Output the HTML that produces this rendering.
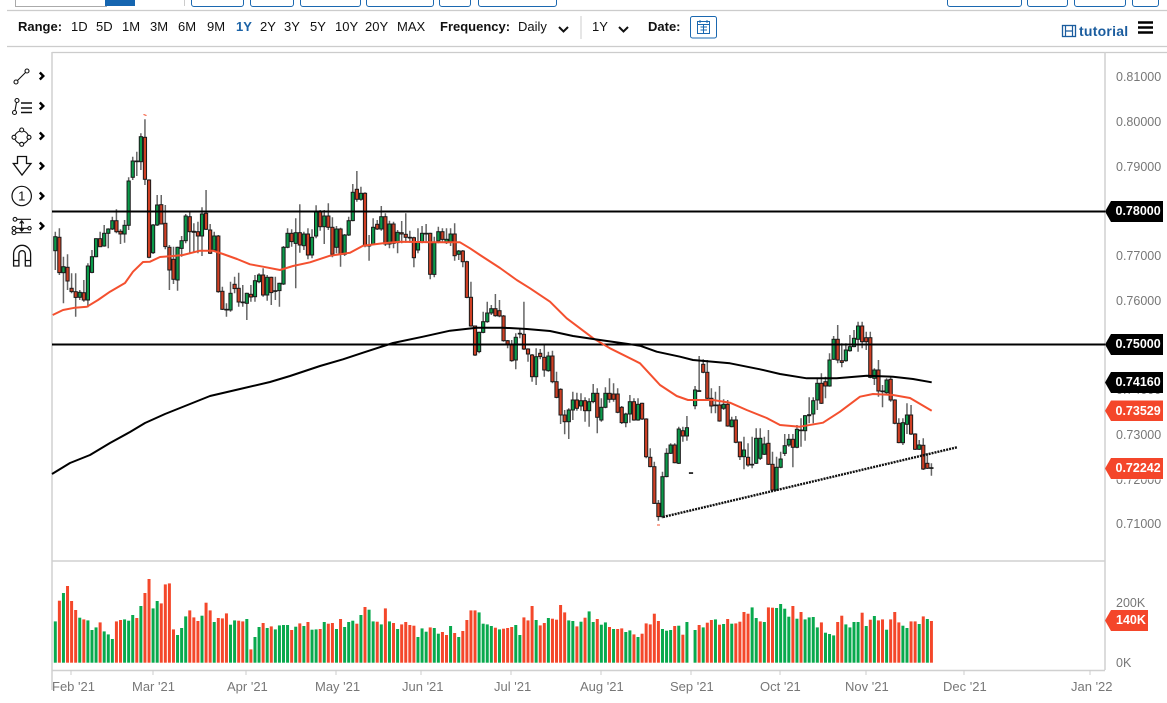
<!DOCTYPE html>
<html><head><meta charset="utf-8"><title>Chart</title>
<style>
html,body{margin:0;padding:0;background:#fff;width:1167px;height:703px;overflow:hidden}
body{position:relative;font-family:"Liberation Sans",sans-serif;color:#111}
.t{position:absolute;font-size:13px;line-height:16px;top:19px;white-space:nowrap}
.b{font-weight:bold}
.btn{position:absolute;top:-4px;height:8.5px;border:1px solid #1b68b0;border-radius:3px;box-sizing:content-box}
svg{position:absolute;left:0;top:0}
</style></head><body>
<div style="position:absolute;left:15px;top:-3px;width:90px;height:8px;border:1px solid #aaa"></div>
<div style="position:absolute;left:105px;top:0;width:30px;height:6px;background:#1565b0"></div>
<div style="position:absolute;left:184px;top:0;width:1px;height:6px;background:#ccc"></div>
<div class="btn" style="left:191px;width:51px"></div>
<div class="btn" style="left:250px;width:42px"></div>
<div class="btn" style="left:300px;width:59px"></div>
<div class="btn" style="left:366px;width:66px"></div>
<div class="btn" style="left:439px;width:30px"></div>
<div class="btn" style="left:478px;width:77px"></div>
<div class="btn" style="left:947px;width:73px"></div>
<div class="btn" style="left:1027px;width:39px"></div>
<div class="btn" style="left:1074px;width:50px"></div>
<div class="btn" style="left:1132px;width:25px"></div>

<span class="t b" style="left:18px">Range:</span>
<span class="t" style="left:71px">1D</span>
<span class="t" style="left:96px">5D</span>
<span class="t" style="left:122px">1M</span>
<span class="t" style="left:150px">3M</span>
<span class="t" style="left:178px">6M</span>
<span class="t" style="left:207px">9M</span>
<span class="t b" style="left:236px;color:#1b62a5">1Y</span>
<span class="t" style="left:260px">2Y</span>
<span class="t" style="left:284px">3Y</span>
<span class="t" style="left:310px">5Y</span>
<span class="t" style="left:335px">10Y</span>
<span class="t" style="left:365px">20Y</span>
<span class="t" style="left:397px">MAX</span>
<span class="t b" style="left:440px">Frequency:</span>
<span class="t" style="left:518px">Daily</span>
<span class="t" style="left:592px">1Y</span>
<span class="t b" style="left:648px">Date:</span>
<span class="t b" style="left:1079px;top:23px;color:#1a5c9e;font-size:14px;letter-spacing:.25px">tutorial</span>

<svg width="1167" height="703" viewBox="0 0 1167 703" fill="none">
<path d="M7 10.5H1167M7 46.5H1167M52 52.5H1167" stroke="#ccc" stroke-width="1.2"/>
<path d="M581 16V39" stroke="#ccc"/>
<path d="M52 52V690M1105 52V670M52 561H1105M52 670.5H1105" stroke="#d0d0d0" stroke-width="1.5"/>
<path d="M71 670V675M153 670V675M246 670V675M336 670V675M421 670V675M511 670V675M601 670V675M691 670V675M780 670V675M866 670V675M964 670V675M1090 670V675" stroke="#ccc"/>
<!-- header icons -->
<path d="M559 27l4.5 4.5 4.5-4.5M619 27l4.5 4.5 4.5-4.5" stroke="#111" stroke-width="2"/>
<rect x="690.5" y="16.5" width="26" height="21.5" rx="2" stroke="#1b68b0"/>
<rect x="697.5" y="21.5" width="12" height="12" stroke="#1b68b0"/>
<path d="M697 24.5H710M700 20V23M707 20V23M700.5 27H707M700.5 30H707M703.5 25V33" stroke="#1b68b0"/>
<rect x="1062.5" y="25.5" width="13" height="11" stroke="#1a5c9e" stroke-width="1.3"/>
<path d="M1065.5 25.5V36.5M1072.5 25.5V36.5M1065.5 31H1072.5" stroke="#1a5c9e" stroke-width="1.2"/>
<path d="M1138 22.5H1153M1138 27.5H1153M1138 32.5H1153" stroke="#000" stroke-width="2.4"/>
<!-- toolbar icons -->
<g stroke="#111" stroke-width="1.1">
<circle cx="16" cy="82" r="2"/><circle cx="27" cy="71" r="2"/><path d="M17.5 80.5L25.5 72.5"/>
<circle cx="14.5" cy="112.5" r="2"/><circle cx="17" cy="100.5" r="2"/><path d="M15 110.5L16.5 102.5"/>
<path d="M21 103H32M21 108H32M21 112.5H32" stroke-width="1.4"/>
<circle cx="21.7" cy="130" r="2"/><circle cx="14" cy="137.3" r="2"/><circle cx="29" cy="137.3" r="2"/><circle cx="21.7" cy="144.3" r="2"/>
<path d="M20 131Q16.5 132 14.8 135.5M23.4 131Q27 132 28.3 135.5M14.8 139Q16.5 142.5 20 143.6M28.3 139Q26.5 142.5 23.4 143.6"/>
<path d="M17.5 156.5H26.5V163.5H31L22 175L13.3 163.5H17.5Z" stroke-width="1.3"/>
<circle cx="21.7" cy="196" r="9.7" stroke-width="1.2"/>
<circle cx="15" cy="219.3" r="1.9"/><circle cx="14" cy="228.3" r="1.9"/><circle cx="14" cy="232.7" r="1.9"/><circle cx="29.5" cy="228.3" r="1.7"/>
<path d="M17 219.3H31M16 232.7H31M16 228.3H27.5M21.7 221V231M19.6 223.5L21.7 220.8L23.8 223.5M19.6 228.5L21.7 231.2L23.8 228.5" stroke-width="1.2"/>
<path d="M13.6 266V254a8.5 8.7 0 0 1 17 0V266H25.3V254a3.2 3.4 0 0 0-6.4 0V266ZM13.6 260.5H18.9M25.3 260.5H30.6" stroke-width="1.3"/>
</g>
<text x="21.7" y="200.5" text-anchor="middle" font-size="13" fill="#111" font-family="Liberation Sans">1</text>
<path d="M39.8 72.5L43.3 76L39.8 79.5M39.8 102.5L43.3 106L39.8 109.5M39.8 132.5L43.3 136L39.8 139.5M39.8 162.5L43.3 166L39.8 169.5M39.8 192.5L43.3 196L39.8 199.5M39.8 222.5L43.3 226L39.8 229.5" stroke="#000" stroke-width="2.4"/>
<g style="filter:blur(.3px)">
<g id="vol"></g>
<g id="wick"></g>
<g id="body"></g>
<path d="M52 211.5H1105M52 344.5H1105" stroke="#000" stroke-width="2"/>
<path d="M52.7 315L63 310L75 307.7L87 306.7L98 300L110 291.7L125 283L133 271.7L143 262L150 261.7L160 257L173 256L183 255L200 250.7L213 250.7L223 254L237 259L250 264.3L263 266.7L280 270L293 266L310 262.3L330 255.7L350 252.7L363 245.7L383 243.3L400 241.7L433 242.3L460 242.3L470 248.3L480 255L500 268L516.7 280L530 288.3L550 301.7L566.7 318.3L593.3 338.3L610 348.3L640 363.3L660 385L676.7 396L688 400L713 400L730 402.7L746.7 410L766.7 418L780 425L800 426.7L823 422.7L840 411.7L860 396.7L873 394L893 395L910 398L931.7 410.7" stroke="#f4502f" stroke-width="2" stroke-linejoin="round"/>
<path d="M52 474L70 463L90 455L110 443L130 432L145 423L165 414L185 406L210 396L240 389L270 382L290 376L320 366L343 359.3L363 352.7L393 343L423 336.7L450 330.7L476.7 327.7L503 327.7L526.7 329L550 331L573 336L600 340L640 345.7L656.7 351.7L680 356.7L693 360L730 363.3L760 369.3L780 374L806.7 378.3L836.7 378.3L866.7 375.7L893 376.7L913 379L931.7 382.3" stroke="#000" stroke-width="2" stroke-linejoin="round"/>
<path d="M663 517L957 447.3" stroke="#111" stroke-width="2.4" stroke-dasharray="2 1"/>
<path d="M143.5 114.5L146.5 115.5M657 525L660 525" stroke="#f4502f" stroke-width="1"/>
</g>
<!-- tags -->
<path d="M1111 201H1163V222H1111L1105 211.5Z" fill="#000"/>
<path d="M1111 334H1163V355H1111L1105 344.5Z" fill="#000"/>
<path d="M1111 372H1163V393H1111L1105 382.5Z" fill="#000"/>
<path d="M1111 400.5H1163V421H1111L1105 410.7Z" fill="#f4462a"/>
<path d="M1111 458H1163V479H1111L1105 468.5Z" fill="#f4462a"/>
<path d="M1111 610H1148V631H1111L1105 620.5Z" fill="#f4462a"/>
</svg>

<style>
.y{position:absolute;left:1116px;font-size:12.5px;line-height:14px;color:#777;white-space:nowrap}
.w{position:absolute;left:1115.5px;font-size:12.5px;line-height:14px;color:#fff;font-weight:bold;white-space:nowrap}
.x{position:absolute;top:680px;font-size:13px;line-height:14px;color:#777;white-space:nowrap}
</style>
<span class="y" style="top:70px">0.81000</span>
<span class="y" style="top:115px">0.80000</span>
<span class="y" style="top:160px">0.79000</span>
<span class="y" style="top:249px">0.77000</span>
<span class="y" style="top:294px">0.76000</span>
<span class="y" style="top:383px;clip-path:inset(10px 0 0 0)">0.74000</span>
<span class="y" style="top:428px">0.73000</span>
<span class="y" style="top:472.5px;clip-path:inset(7px 0 0 0)">0.72000</span>
<span class="y" style="top:517px">0.71000</span>
<span class="y" style="top:596px">200K</span>
<span class="y" style="top:656px">0K</span>
<span class="w" style="top:204px">0.78000</span>
<span class="w" style="top:337px">0.75000</span>
<span class="w" style="top:375px">0.74160</span>
<span class="w" style="top:403.5px">0.73529</span>
<span class="w" style="top:461px">0.72242</span>
<span class="w" style="top:613px;left:1116px">140K</span>
<span class="x" style="left:52px">Feb '21</span>
<span class="x" style="left:132px">Mar '21</span>
<span class="x" style="left:227px">Apr '21</span>
<span class="x" style="left:315px">May '21</span>
<span class="x" style="left:402px">Jun '21</span>
<span class="x" style="left:494px">Jul '21</span>
<span class="x" style="left:580px">Aug '21</span>
<span class="x" style="left:670px">Sep '21</span>
<span class="x" style="left:760px">Oct '21</span>
<span class="x" style="left:845px">Nov '21</span>
<span class="x" style="left:943px">Dec '21</span>
<span class="x" style="left:1071px">Jan '22</span>

<script>
var V=[184,-122,99,-78,-123,-150,173,-178,181,210,202,-187,214,223,237,-184,-180,178,182,165,-174,138,-99,-57,145,123,-130,-73,-70,-208,225,204,169,-151,-172,-183,167,-128,-151,186,-174,-175,-160,194,181,-182,-184,177,-268,231,201,-189,204,-199,208,196,195,195,-210,200,-190,198,-186,209,208,-207,186,-191,-189,207,-177,201,186,182,-191,165,-141,149,184,-185,193,-145,184,-189,207,
-193,-186,-195,-197,231,205,215,-202,204,221,-216,-225,198,-219,231,-213,-180,-151,-151,157,191,193,198,-203,208,-206,-204,-201,195,225,-172,-181,-138,180,-196,-189,174,-176,-179,-135,-157,181,183,-199,185,-173,154,186,-177,194,187,-201,207,-207,-205,216,211,-223,231,-221,-190,-193,-161,-183,207,212,210,-198,197,-224,186,308,210,-195,202,-188,-180,178,-194,192,-177,191,-190,-185,-156,-161,142,174,-184,186,
-142,-143,144,132,146,170,-138,176,-156,178,172,171,202,-187,218,222,226,-186,-167,193,202,186,186,-158,198,-179,168,-181,-178,209,-178,-156,-187,197,204,-184,-184,192,-169,177,-183];
var S=[[100,"G410,452,395,510 R412,518,385,525 G500,518,470,610 R502,543,463,570 R565,575,520,580 R575,592,520,650 G577,592,570,600 R578,600,540,605 G498,600,490,622 G470,517,450,520 G416,470,415,472 R416,440,395,440 G400,438,375,440 G387,400,385,445 G362,387,350,390 R362,395,328,400 R394,402,388,432 G376,402,360,428 G243,376,232,390 G183,232,170,240 G183,185,155,228 G110,185,100,210 R112,238,58,255 R240,472,238,475 G375,458,372,462 G315,375,285,378 R314,372,285,372 R370,440,315,448 R442,510,435,570 R478,538,440,552 G442,540,440,572 G422,445,408,470 G348,422,342,430 R350,395,335,458 R394,397,370,458 R395,408,365,460 G342,408,322,468 R340,388,270,390 R390,460,372,462 G408,450,395,452 R408,575,405,578 R574,628,560,630 R628,630,610,650 G580,630,545,635 R553,566,530,580 R565,606,518,620 R606,608,555,620 G580,610,578,660"],
[160,"R403,411,375,425 G362,410,345,425 G345,365,340,370 R345,405,325,410 G352,405,345,422 R352,398,350,435 R392,394,350,420 G370,392,368,440 G262,372,258,375 G220,262,205,265 R220,245,208,260 G218,250,175,385 R218,255,133,278 G222,257,215,270 R222,285,205,298 G232,285,208,295 G155,228,136,235 R155,200,150,212 G168,200,150,252 R168,202,130,210 R202,283,172,292 G207,262,198,280 R207,283,203,320 G225,283,222,288 G182,225,170,228 G97,182,72,184 R88,118,33,125 G100,118,80,122 R100,258,97,262 R255,258,225,302 G202,252,175,255 R193,207,180,210 G170,207,138,212 R170,252,160,258 G192,252,182,265 R192,250,185,265 G217,248,210,280 R218,222,183,250 R223,232,160,248 R232,234,212,248 R233,293,230,322 G245,270,205,280 G220,245,198,250 R220,222,192,248 R220,343,218,358 G248,343,230,352 G215,243,200,250 R215,238,205,245 G238,248,205,252 G222,245,205,258 R222,287,190,302 G273,283,270,300 R273,305,270,322 R305,412,302,415"],
[280,"R52,138,5,140 R138,225,138,228 G157,215,155,220 G125,157,95,160 G99,125,65,128 G86,99,75,105 R86,107,42,110 R92,108,60,112 R108,182,105,185 R182,193,180,205 R195,242,180,245 G172,240,160,268 R160,162,148,175 R163,207,65,210 R207,222,205,245 R225,290,222,305 G230,290,205,315 R220,230,207,238 R232,270,195,290 G228,272,215,275 R228,305,212,310 R305,352,275,355 R328,405,325,432 R405,425,390,463 G390,425,385,477 G360,390,335,420 R360,385,338,392 G362,378,340,392 R362,392,352,425 G365,392,355,440 G340,365,312,370 R340,412,325,460 G382,420,355,425 G340,382,322,385 R340,358,295,368 R342,358,310,365 R342,397,325,400 R382,428,378,432 G402,428,398,442 G365,402,345,428 R365,420,355,422 G373,420,355,422 R370,417,368,420 R417,530,415,535 R532,560,505,562 R560,670,545,672 R670,710,660,722 G590,710,575,715 G520,590,505,592 G495,520,490,522 R495,548,490,550 G447,550,440,552"],
[310,"R362,378,350,395 G353,378,318,392 G488,490,488,490 G240,287,228,298 G242,244,138,245 R163,187,148,190 R187,265,150,268 R265,288,235,310 R285,287,245,310 R285,333,228,335 G283,295,268,300 R283,348,270,350 G330,350,320,352 R330,397,318,400 R396,440,395,450 G420,440,380,478 R442,465,400,470 R463,465,380,475 G385,460,355,462 G385,445,355,450 G402,433,380,435 R400,463,360,465 R463,540,425,542 G472,540,440,542 G447,472,425,475 G407,430,372,438 G388,405,372,410 R388,412,372,472 G358,412,345,415 R360,362,325,410 G317,362,315,392 R314,317,262,340 G272,312,262,340 G220,270,205,300 R220,280,190,282 R215,228,200,265 G150,228,130,230 G88,148,78,150 R88,150,45,160 R152,157,100,172 G120,152,100,155 G110,122,75,125 G85,110,60,112 G48,88,35,125 R48,95,35,115 R83,95,65,120 R83,202,65,205 G180,205,175,225 R180,243,150,260 R243,245,225,292 G210,248,205,255 R208,270,200,275 R270,340,268,343 R340,398,325,400 G338,398,325,405 G315,343,280,372 R315,372,285,375 R372,418,370,420 G405,418,390,420 R406,477,385,480 R460,475,430,477 R473,475,460,497"]];
function X(i){return 55.3+4.075*i}
var v="";
V.forEach(function(t,i){var a=Math.abs(t),h=(308-a)/3;if(h<=0)return;
v+='<rect x="'+(X(i)-1.5).toFixed(2)+'" y="'+(662.7-h).toFixed(1)+'" width="3" height="'+h.toFixed(1)+'" fill="'+(t<0?'#f4472a':'#08a94d')+'"/>';});
document.getElementById("vol").innerHTML=v;
var w="",b="",n=0;
S.forEach(function(s){var o=s[0];s[1].split(" ").forEach(function(c){
var g=c[0]=="G",p=c.slice(1).split(",").map(function(q){return o+q/3}),x=X(n);
if(p[2]!=p[3])w+="M"+x.toFixed(2)+" "+p[2].toFixed(1)+"V"+p[3].toFixed(1);
var h=Math.max(p[1]-p[0],.6);
b+='<rect x="'+(x-1.6).toFixed(2)+'" y="'+p[0].toFixed(1)+'" width="3.2" height="'+h.toFixed(1)+'" fill="'+(g?'#0b9a4a':'#cf3f24')+'" stroke="#1a1a1a" stroke-width="1"/>';
n++;});});
document.getElementById("wick").innerHTML='<path d="'+w+'" stroke="#666" stroke-width="1.5"/>';
document.getElementById("body").innerHTML=b;
</script>
</body></html>
